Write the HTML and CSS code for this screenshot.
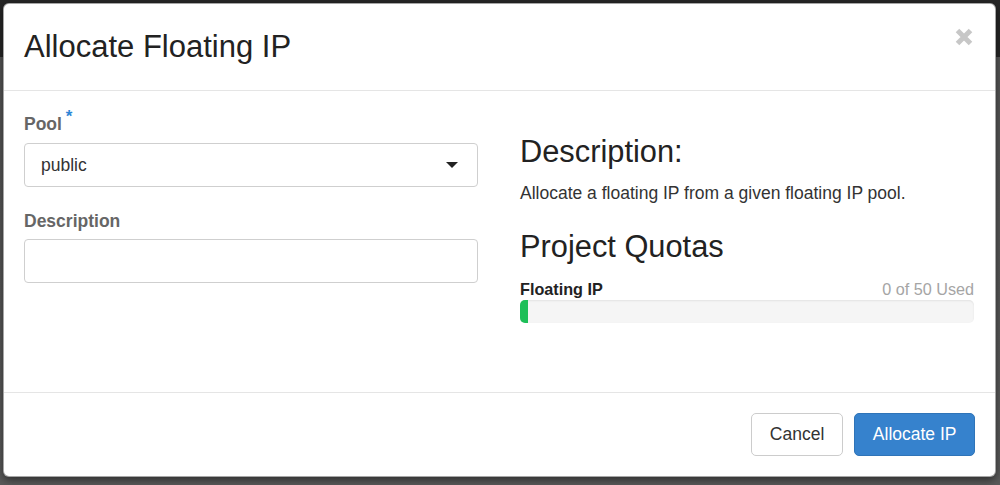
FILE: index.html
```html
<!DOCTYPE html>
<html lang="en">
<head>
<meta charset="utf-8">
<title>Allocate Floating IP</title>
<link rel="stylesheet" href="styles.css">
</head>
<body>
<div class="modal">
  <div class="modal-header">
    <h4 class="modal-title">Allocate Floating IP</h4>
    <button class="close" type="button" aria-label="Close">
      <svg width="20" height="20" viewBox="0 0 20 20"><path d="M3.5 3.5 L16.5 16.5 M16.5 3.5 L3.5 16.5" stroke="#c7c7c7" stroke-width="5" stroke-linecap="butt" fill="none"/></svg>
    </button>
  </div>
  <div class="modal-body">
    <div class="col col-left">
      <label class="field-label">Pool <span class="req">*</span></label>
      <div class="select">
        <span>public</span>
        <span class="caret"></span>
      </div>
      <label class="field-label second">Description</label>
      <div class="input"></div>
    </div>
    <div class="col col-right">
      <h3 class="heading">Description:</h3>
      <p class="desc">Allocate a floating IP from a given floating IP pool.</p>
      <h3 class="heading second">Project Quotas</h3>
      <div class="quota-row">
        <strong>Floating IP</strong>
        <span class="used">0 of 50 Used</span>
      </div>
      <div class="progress"><div class="progress-bar" style="width: 8px"></div></div>
    </div>
  </div>
  <div class="modal-footer">
    <button class="btn btn-default" type="button">Cancel</button>
    <button class="btn btn-primary" type="button">Allocate IP</button>
  </div>
</div>
</body>
</html>
```
FILE: styles.css
```css
* { box-sizing: border-box; }
html, body { margin: 0; padding: 0; }
body {
  width: 1000px;
  height: 485px;
  overflow: hidden;
  background: linear-gradient(#262626 0, #262626 57px, #555555 57px, #5a5a5a 100%);
  font-family: "Liberation Sans", Arial, sans-serif;
  font-size: 17.5px;
  line-height: 25px;
  color: #333;
  padding: 3px 0 0 3px;
}
.modal {
  width: 993px;
  height: 474px;
  background: #fff;
  border: 1px solid rgba(0,0,0,0.35);
  border-radius: 6px;
  box-shadow: 0 3px 9px rgba(0,0,0,0.5);
  display: flex;
  flex-direction: column;
}
.modal-header {
  height: 87px;
  padding: 26px 20px 0 20px;
  border-bottom: 1px solid #e5e5e5;
  display: flex;
  justify-content: space-between;
  align-items: flex-start;
}
.modal-title {
  margin: 0;
  font-size: 31px;
  line-height: 34px;
  font-weight: normal;
  color: #222;
}
.close {
  margin: -3px 1px 0 0;
  padding: 0;
  border: 0;
  background: none;
  width: 20px;
  height: 20px;
  display: block;
}
.close svg { display: block; }
.modal-body {
  height: 302px;
  padding: 21px 20px 0 20px;
  display: flex;
  gap: 42px;
  border-bottom: 1px solid #e5e5e5;
}
.col { width: 454px; flex: none; }
.field-label {
  display: block;
  font-weight: bold;
  color: #666;
  margin-bottom: 6px;
}
.field-label.second { margin-top: 22px; margin-bottom: 5px; }
.req {
  color: #2f86d6;
  font-size: 17px;
  position: relative;
  top: -8px;
  margin-left: -1px;
}
.select {
  height: 44px;
  border: 1px solid #cfcfcf;
  border-radius: 4px;
  padding: 0 19px 0 16px;
  display: flex;
  align-items: center;
  justify-content: space-between;
  color: #333;
}
.caret {
  width: 0;
  height: 0;
  border-left: 6px solid transparent;
  border-right: 6px solid transparent;
  border-top: 6px solid #222;
}
.input {
  height: 44px;
  border: 1px solid #cfcfcf;
  border-radius: 4px;
}
.heading {
  margin: 23px 0 12px 0;
  font-size: 30.8px;
  line-height: 34px;
  font-weight: normal;
  color: #222;
}
.heading.second { margin-top: 24px; margin-bottom: 15px; }
.desc { margin: 0; }
.quota-row {
  display: flex;
  justify-content: space-between;
  font-size: 16.2px;
  line-height: 20px;
  margin-bottom: 1px;
}
.quota-row strong { color: #222; }
.used { color: #a5a5a5; }
.progress {
  height: 23px;
  background: #f5f5f5;
  border-radius: 5px;
  box-shadow: inset 0 1px 2px rgba(0,0,0,0.08);
  overflow: hidden;
}
.progress-bar {
  height: 100%;
  background: #1dbf58;
}
.modal-footer {
  flex: 1;
  padding: 20px 20px 0 20px;
  display: flex;
  justify-content: flex-end;
  align-items: flex-start;
  gap: 11px;
}
.btn {
  height: 43px;
  padding: 0 18px;
  font-family: "Liberation Sans", Arial, sans-serif;
  font-size: 17.5px;
  line-height: 25px;
  border-radius: 5px;
  border: 1px solid #ccc;
  cursor: pointer;
}
.btn-default { background: #fff; color: #333; }
.btn-primary {
  background: #3682cd;
  border-color: #2f74b8;
  color: #fff;
  padding: 0 17.5px;
}
```
